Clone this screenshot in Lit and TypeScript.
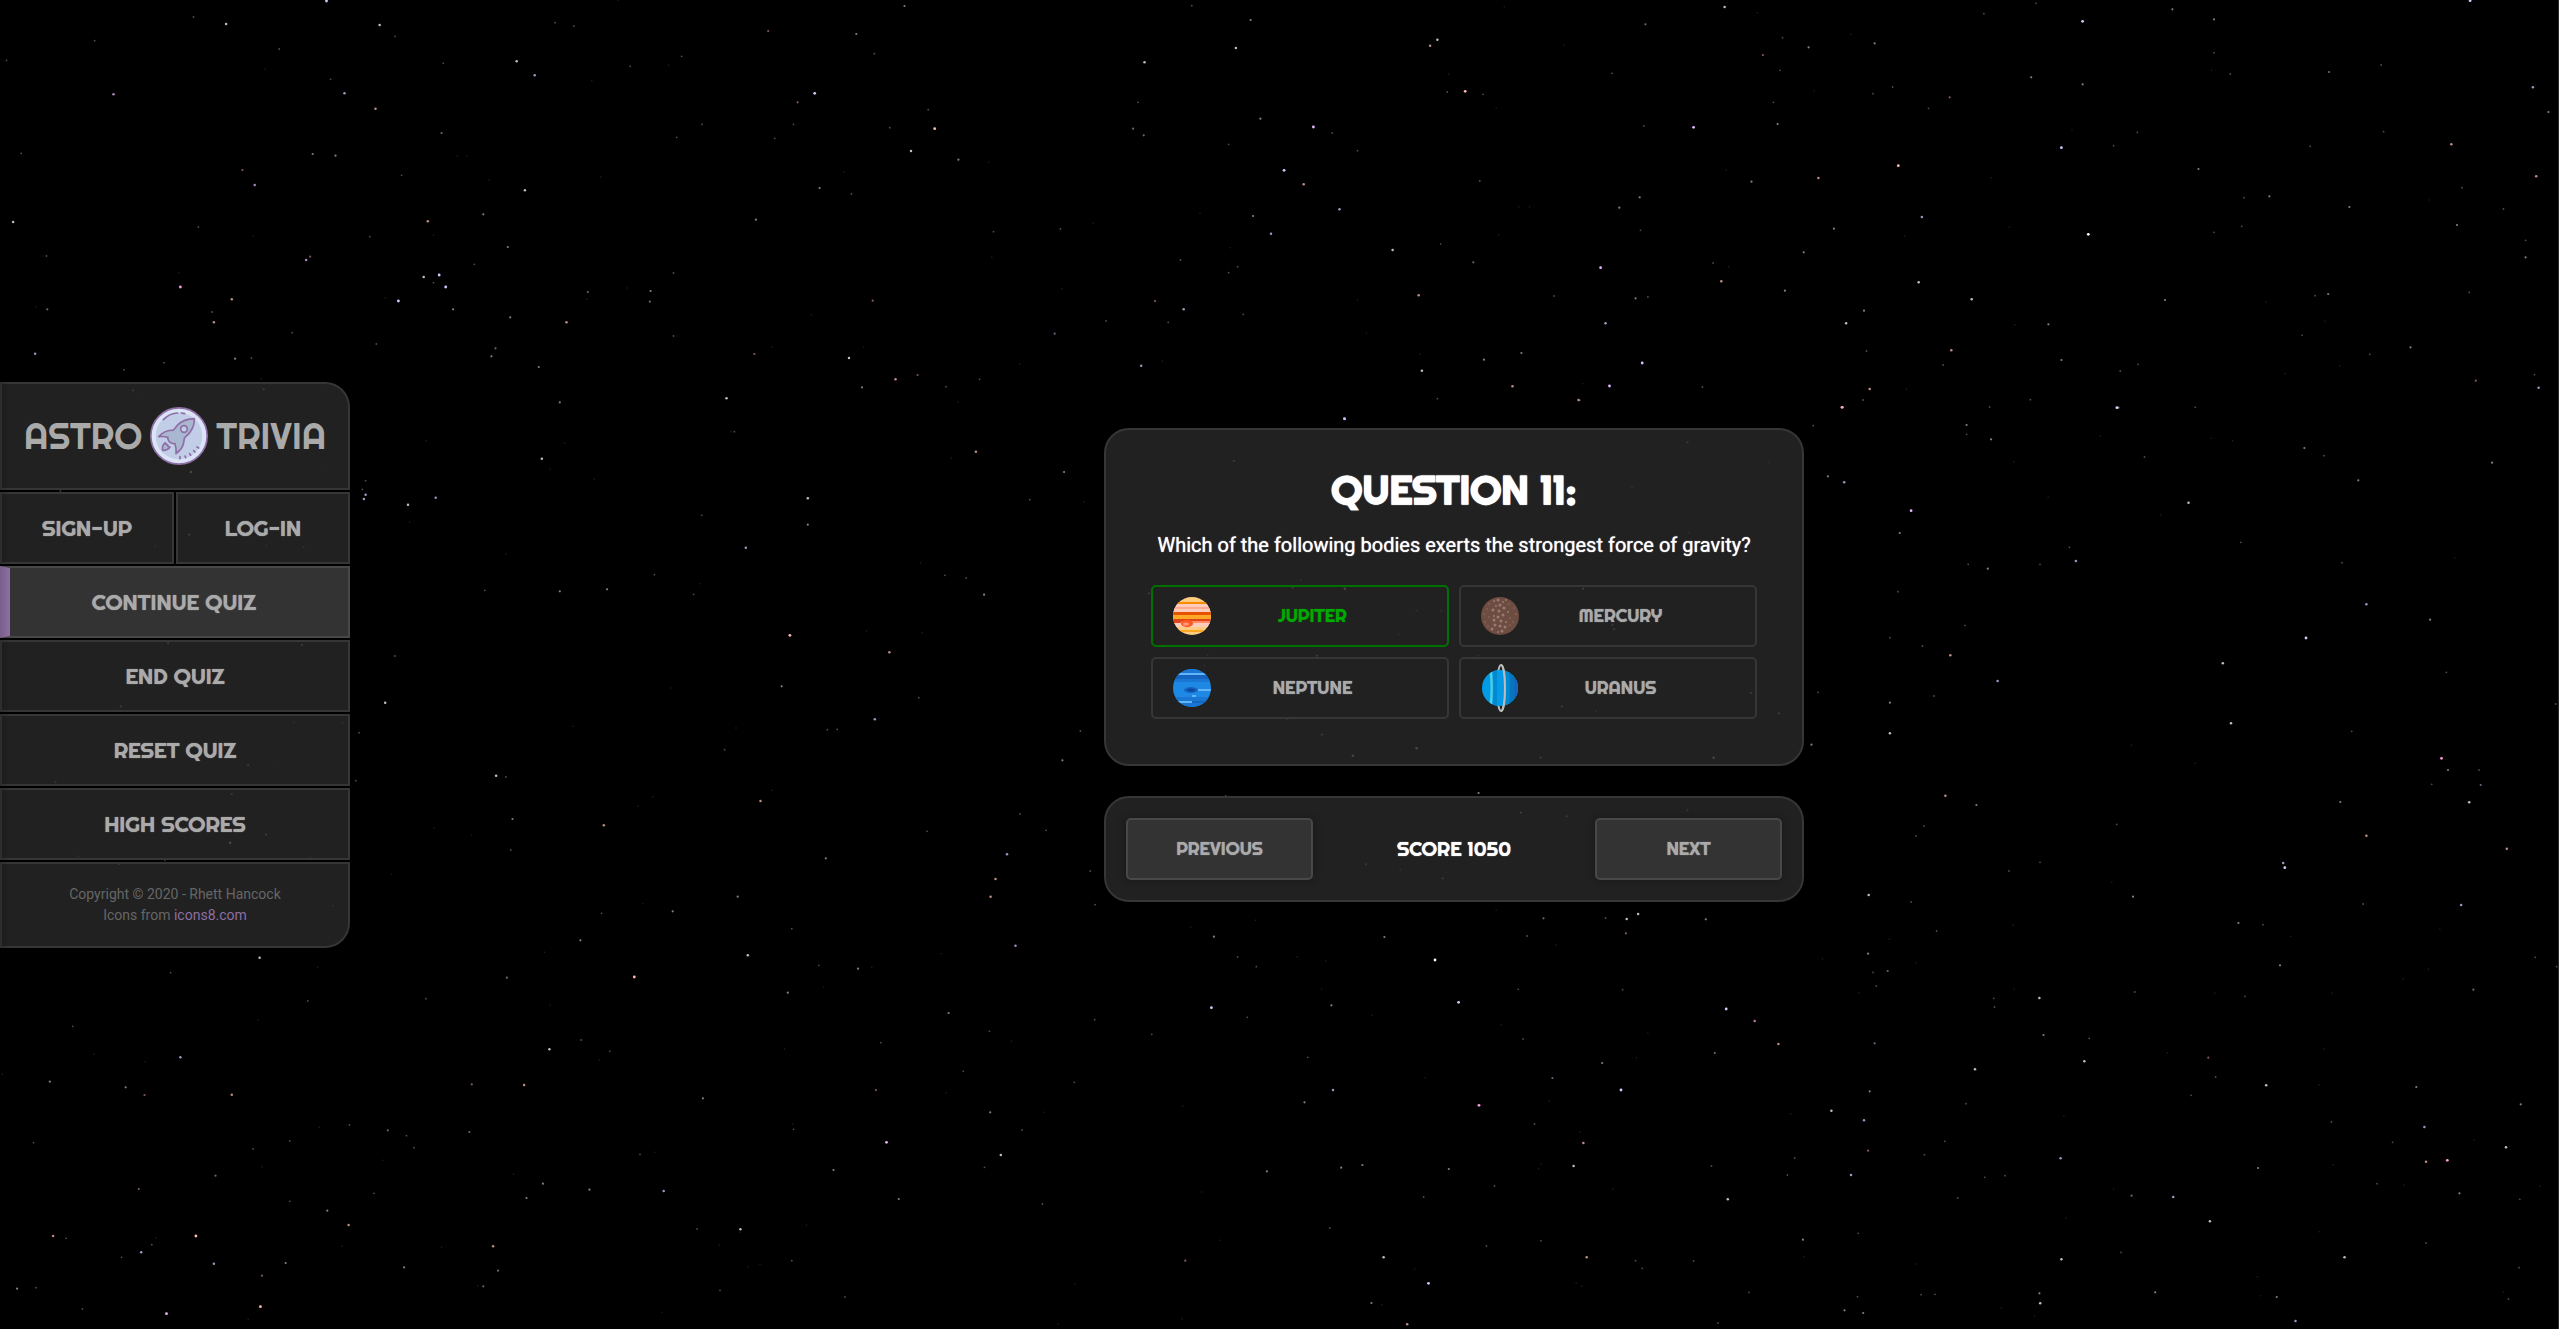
import { LitElement, css, html, svg } from "lit";
import { customElement, property, state } from "lit/decorators.js";
import { classMap } from "lit/directives/class-map.js";

/* ---------- star field ---------- */

interface Sector {
  x: number;
  y: number;
  sx: number;
  sy: number;
  stars: string;
}

/* Each star is "x,y,level[tint]": level 1 (faint) to 5 (bright),
   tint b = blue, p = pink, v = violet, r = red. */
const SECTORS: Sector[] = [
  {
    x: 0, y: 0, sx: 1280 / 1568, sy: 1 / 3,
    stars: `400,3,5b 757,1,1 1108,18,3 1460,17,2 1532,60,3 237,51,2 277,72,4 465,75,4 484,109,2 680,68,2 703,78,2
    941,93,3r 1049,102,3 116,122,2 342,147,2 8,181,2 543,190,2 633,184,4 655,226,4b 835,169,2 819,195,1 772,199,2
    1071,161,2 1514,144,4 1402,187,4 325,208,1 405,238,2 725,242,1 139,283,4v 422,280,4b 460,326,4r 998,280,5b
    977,307,3r 1137,329,2 1394,307,2 1544,356,3 860,373,2 972,373,2 1145,386,5r 1090,383,2 1388,386,3b 1401,406,3b
    829,412,2 949,415,2 541,399,3b 383,462,3 411,467,3 26,460,2 1116,453,4 1174,479,3 1211,487,1 1505,433,2 297,510,3r
    312,555,4v 492,526,2 560,467,1 572,467,1 643,571,4 736,531,1 1034,517,1 1004,564,3 1043,582,2 599,540,1 592,643,3
    524,664,4r 16,666,4 243,681,2 310,707,1 453,710,2 531,706,1 926,659,3 1217,695,2 1299,687,2 1339,669,1 1470,640,1
    1535,648,3 1557,701,4b 57,768,2 375,780,4v 380,770,3p 219,819,1 622,741,3 581,793,2 519,831,4 538,825,5b 531,848,2
    546,861,5b 221,861,5p 284,898,4r 488,903,5b 472,893,1 555,928,3 825,819,2 720,876,3r 797,873,3 768,864,1 719,898,1
    796,905,3b 1069,902,3r 1215,771,1 1446,780,2 1507,743,1 1516,800,2 1505,818,2 1301,866,1 1415,903,3r 1450,928,4b
    1431,967,2 1523,943,2 1355,963,2 1292,1001,3v 44,921,1 58,928,3b 260,936,2 262,967,4r 358,998,2 625,952,3
    694,967,4r 994,944,1 825,1008,2 461,1032,2 607,1045,3b 602,1069,3 660,1101,3 43,1061,4v 201,1088,2 288,1076,3
    308,1074,2 152,1109,2 320,1136,1 924,1062,3r 1040,1074,4 1058,1042,1 1097,1138,4r 1124,1125,3p 1056,1162,3
    1159,1160,2 1200,1138,2 1249,1093,1 1398,1097,4b 1424,1083,1 890,1195,4 946,1042,1 163,1171,3 323,1168,3 172,1184,1`,
  },
  {
    x: 1280, y: 0, sx: 1279 / 1568, sy: 1 / 3,
    stars: `275,20,1 545,21,4 585,38,1 927,10,2 863,41,2 984,64,5b 1094,28,3 1145,58,3 1459,2,5b 448,73,3b 193,119,4
    184,137,4r 348,136,1 592,165,3r 616,113,2 648,142,3 700,103,1 729,130,3 613,211,2 407,220,2 207,223,1 921,232,3
    984,253,3 751,261,2 727,281,2 655,273,1 821,292,3r 1145,158,2 1142,211,1 1165,222,2 1286,216,3r 1350,195,2
    1536,262,4b 1555,336,3 205,276,2 227,274,5r 249,283,2 265,323,1 605,307,2 795,325,2 610,372,3 446,378,2
    507,382,5v 41,381,5v 64,399,2 95,452,2 971,390,1 1051,397,2 1022,437,2 958,443,5b 1353,395,2 1263,439,2 1436,433,4r
    5,511,5b 29,553,4r 758,497,5r 547,510,1 872,533,1 578,545,3 660,534,4r 245,543,2 1126,507,3 1540,529,4r 1449,563,2
    441,592,3 416,623,3 73,628,4b 293,620,1 306,620,1 1182,593,2 1213,589,3 1311,621,3 1409,600,1 1500,627,2 787,651,4b
    442,691,2 268,704,1 197,732,2r 138,750,4 679,686,3 894,682,1 991,703,5 766,708,1 1145,697,2 1179,679,2 1443,675,3
    1527,721,2 1527,772,3 237,787,3v 393,803,5v 642,757,3 531,789,2 550,800,1 541,844,4r 783,847,4 619,872,3 170,886,4r
    336,888,2 436,895,3 451,891,2 95,900,1 848,898,4 1085,900,3 1285,882,3 1269,887,2 1458,877,2 1209,906,1 716,932,3
    694,970,4 399,970,4b 901,974,1 942,973,3 106,999,1 1253,1006,2 1281,964,1 1386,1042,3 1336,1063,2 296,1059,3
    250,1079,3 172,1062,1 719,1053,2 823,1051,4r 813,1095,2 958,1080,3 1052,1093,2 1030,1113,2 444,1089,5v 174,1112,4
    285,1159,4r 404,1158,5v 518,1161,2 371,1151,1 723,1167,4r 768,1168,1 1232,1121,1 1299,1098,1 1466,1142,3r
    1538,1124,2 1543,1163,4b 193,1196,2 366,1200,4r 715,1200,2 920,1199,2 689,1222,5r 870,1221,2 1026,1223,5b
    1122,1222,2 79,1256,5b`,
  },
  {
    x: 0, y: 910, sx: 1280 / 1568, sy: 1 / 3,
    stars: `737,10,2 824,4,3 970,56,2 711,91,3 667,127,1 916,136,4 1244,107,4v 1153,131,1 1459,52,1 1487,80,3
    1538,31,1 1516,141,2 1539,170,2 1003,166,2 1051,176,3 1068,172,1 318,143,4 389,172,1 209,188,2 621,203,3b
    777,201,5r 965,248,3 1009,232,1 377,273,2 522,266,2 674,286,1 1162,309,3 1341,329,2 1484,293,5b 1528,322,2
    316,331,1 89,349,2 1212,364,2 1239,394,1 1079,398,2 1411,373,2 712,390,2 673,418,4 747,424,2 734,449,1
    961,417,1 221,442,4b 115,433,1 178,455,1 3,493,1 61,515,3 1180,484,2 1316,517,2 578,523,3r 642,525,4r 154,532,3
    177,555,3r 284,554,4r 861,565,3 1073,540,3r 1159,548,1 1213,607,3 1279,607,1 1449,588,1 428,645,2 475,661,3b
    575,666,3b 498,677,2 391,652,1 355,693,2 41,698,2 310,717,2 507,713,2 972,658,2 971,643,1 1252,660,2 1086,697,5v
    1226,735,4 1206,772,2 784,733,2 802,727,1 469,751,1 321,771,1 1021,780,3 1552,784,3 264,797,3r 629,793,1
    665,821,3 722,839,3 813,843,4b 645,864,3 458,850,2 170,837,3r 355,874,2 1101,867,3 1277,882,2 1472,846,1 401,902,3
    427,945,4r 854,957,2 907,958,4 906,967,1 988,946,1 65,978,4r 81,985,2 191,983,1 240,978,5r 186,1004,2 419,1009,1
    604,1009,4r 541,1012,1 881,1005,1 1495,991,1 173,1027,4b 149,1042,2 262,1061,4v 350,1059,3 495,1072,3
    610,1082,3b 970,1052,2 916,1071,1 1452,1052,3r 931,1063,1 321,1097,3r 21,1136,3 44,1133,2 585,1128,1 592,1129,3r
    882,1141,2 1035,1161,2 1317,1123,1 101,1197,2 204,1211,5v 319,1190,5r 304,1228,1 811,1207,1 1448,1227,1 1296,1241,1`,
  },
  {
    x: 1280, y: 910, sx: 1279 / 1568, sy: 1 / 3,
    stars: `265,1,1 323,25,3b 399,24,2 425,27,4 439,12,4 522,28,3 128,81,3 303,78,2 424,70,3r 338,105,1 899,46,1
    805,63,2 747,88,1 1175,39,3 1205,44,2 1239,79,1 1422,58,1 21,140,1 56,153,1 190,150,5 721,131,3 780,158,1 665,147,1
    727,187,2 745,183,3r 1226,166,3 1408,178,1 1539,142,2 1565,170,2 1377,207,1 731,228,2 710,249,1 900,238,1
    51,238,1 292,238,2 420,239,2 219,277,5b 63,286,3 113,316,1 875,265,2 931,264,4 876,291,2 1048,246,2 1146,250,1
    1183,259,2 1290,250,1 1463,239,3b 547,297,5b 582,333,4p 271,345,1 298,387,2 451,370,1 936,375,3 992,385,2
    611,402,4r 729,400,3b 533,429,3b 34,442,2 395,459,3 437,443,1 1138,443,3p 1280,417,1 1088,428,1 986,454,4
    852,478,4 334,504,3b 178,503,1 65,540,4b 418,540,5b 1147,501,2 1209,526,4 1274,524,1 1393,531,3 30,577,3 723,544,3
    841,581,2 1117,556,2 1521,583,3 244,586,5p 330,573,1 676,602,4 716,631,4v 626,611,1 961,618,1 312,642,2
    368,667,1 1289,636,2 1403,651,4b 1364,697,2 1464,690,1 372,699,4r 815,694,2 721,722,3r 1503,712,4 957,745,4b
    790,734,2 631,744,2 1405,755,4r 1431,751,5p 101,765,3 75,773,3 207,777,3 320,762,1 317,776,1 360,768,4 529,768,2
    1199,774,3 1291,764,1 622,795,2 700,795,4b 864,802,2 889,797,2 263,828,2 408,837,1 1345,821,2 1378,826,1 1446,850,3
    1545,828,1 176,861,2 549,868,4 831,864,2 1022,838,1 1044,857,3b 1095,861,4b 1520,868,2 1140,934,4 964,924,1 61,954,2
    709,970,2 1274,965,1 320,992,2 641,989,3 253,1008,2 1405,999,2 1031,1027,2 127,1042,4 376,1042,4r 436,1052,2
    507,1053,2 642,1040,1 958,1048,4 1305,1042,4 780,1062,1 444,1075,2 1519,1073,2 165,1077,1 1198,1100,1 182,1120,5b
    363,1119,1 370,1128,1 575,1147,2 708,1160,2 786,1154,2 803,1153,2 931,1150,3 1073,1147,3 932,1180,4 1202,1157,1
    1222,1161,3 1500,1146,1 1506,1167,2 112,1179,3 125,1184,1 692,1201,3 715,1209,3 884,1195,1 925,1219,1
    1245,1233,4b 156,1243,4r 537,1239,2`,
  },
  {
    x: 0, y: 400, sx: 2559 / 1568, sy: 1 / 3,
    stars: `343,7,3 587,7,1 448,95,1 450,95,2 261,122,1 346,130,1 598,155,4r 332,176,4 583,174,1 652,216,3 337,207,1
    364,237,1 224,242,2 222,268,2 224,284,4b 223,297,4b 267,293,4v 250,314,4 495,295,4 664,305,1 631,299,2 251,367,1
    430,346,2 495,374,3 457,443,4b 310,462,1 564,489,1 401,524,2 579,526,2 592,534,2 429,551,1 297,571,2 343,574,3
    372,568,3 425,583,2 603,584,3 484,706,5r 531,692,1 565,698,1 242,768,2 545,757,4r 411,864,1 479,859,3 563,893,2
    236,908,4 536,958,4b 351,979,1 451,984,1 662,993,2 507,989,2 513,988,2 444,1049,2 220,998,2 651,1081,3 304,1127,4
    310,1131,2 218,1142,2 466,1203,4r 473,1171,1 400,1190,1 391,1219,1 314,1257,3 370,1276,4r 625,1242,2 266,1285,1
    641,1291,2 568,1294,2 289,1306,1 313,1350,2 617,1363,4b 506,1375,3 668,1413,2 240,1423,1 610,1437,4r 452,1490,3
    607,1490,4r 671,1514,2 394,1511,1 824,57,4v 968,1,2 1129,22,4p 1298,23,3 1111,77,2 1205,75,3 1205,103,2 1220,118,3
    1287,107,1 1355,115,1 1412,144,3 1368,122,1 1314,171,2 1424,167,2 1527,188,3 1234,185,1 1120,229,3 1130,247,4b
    1445,241,3 1341,308,4 1255,292,1 1171,332,5v 1324,345,1 1164,399,3 1373,427,2 1268,442,2 1272,483,4b
    1206,493,2 1250,493,2 1218,506,3 1435,488,2 1504,473,1 1163,575,2 1450,613,4b 1489,659,3 1204,676,2 1158,713,2
    1413,714,5b 1178,738,2 1195,766,4r 1362,790,4 1499,817,2 1224,843,4b 1114,877,2 1185,888,2 1158,908,3 1367,970,4
    1441,994,2 1158,1000,4 1110,1034,3 1496,1075,5p 1345,1090,1 1306,1036,1 1500,1110,3 1519,1110,2 1490,1153,2
    1520,1155,3b 1192,1187,4r 1434,1206,3 1513,1207,4 1211,1215,3 1297,1273,2 1179,1278,2 1450,1307,4r 1174,1308,2
    1536,1346,4r 1250,1387,2 1399,1389,4b 1400,1403,5b 1231,1413,2 1294,1447,1 1145,1485,4 1307,1490,3 1508,1515,4b
    1171,1506,2 1448,1512,2 1566,912,2 751,1188,2 906,1179,3 117,216,4 199,210,1 37,273,2r 116,404,3 163,436,2
    186,441,2 95,439,2 103,730,3 185,735,3 74,919,3 180,967,2 210,969,2 152,1095,3 171,1096,1 34,1147,3v 142,1182,3
    163,1304,3 141,1328,4 48,1369,2 190,1375,3 101,1381,2r 73,1392,3 204,1517,2 1034,127,3 756,183,3 1084,187,2
    1000,261,2 1035,398,2 797,540,2 704,580,3 792,563,3 824,566,4 970,566,3 868,632,2 883,632,2 857,703,2 988,675,3
    989,688,3 740,766,2 807,767,3 738,796,2 906,767,2 1073,879,3 957,920,3 978,932,2 789,955,4 810,1004,3 868,1045,4
    829,1067,4 944,1073,3 1050,1073,4 1090,940,3 932,1238,3 960,1249,3 1034,1231,3b 858,1410,2 837,1393,3 884,1435,3`,
  },
];

const TINTS: Record<string, string> = {
  "": "#ffffff",
  b: "#ccccff",
  p: "#ff99dd",
  v: "#e0b8ff",
  r: "#ffbbb0",
};

@customElement("star-field")
export class StarField extends LitElement {
  static styles = css`
    :host {
      position: absolute;
      inset: 0;
      overflow: hidden;
      background: #000;
    }
    .sky {
      display: block;
      width: 100%;
      height: 100%;
    }
  `;

  private renderStar(sector: Sector, entry: string) {
    const [x, y, kind] = entry.split(",");
    const level = Number(kind[0]);
    const cx = sector.x + Number(x) * sector.sx;
    const cy = sector.y + Number(y) * sector.sy;
    const r = [0, 0.7, 0.9, 1.1, 1.25, 1.4][level];
    const opacity = [0, 0.14, 0.3, 0.5, 0.75, 1][level];
    return svg`<circle cx=${cx.toFixed(1)} cy=${cy.toFixed(1)} r=${r} fill=${TINTS[kind.slice(1)]} opacity=${opacity} />`;
  }

  render() {
    return html`<svg class="sky" aria-hidden="true">
      ${SECTORS.map((s) => s.stars.trim().split(/\s+/).map((e) => this.renderStar(s, e)))}
    </svg>`;
  }
}

/* ---------- icons ---------- */

const rocket = html`<svg class="logo" viewBox="0 0 174 174" fill="none" stroke="#8e6ea4" stroke-linecap="round" stroke-linejoin="round" aria-hidden="true">
  <circle cx="87" cy="87" r="84.500" fill="#dbe4f6" stroke-width="5" />
  <circle cx="87" cy="87" r="70" fill="#c2cde8" stroke="none" />
  <path d="M133 35C114 36 94 43 84 53C78 59 74 66 69 70C53 68 39 75 26 89C37 88 46 89 54 91C52 94 54 99 58 104C63 109 69 111 75 110C78 120 79 130 78 140C90 131 99 121 101 107C102 101 102 97 104 92C121 78 134 57 133 35Z" fill="#a9b7d0" stroke-width="5" />
  <circle cx="102" cy="66" r="10" fill="#c2cde8" stroke-width="5" />
  <path d="M46 107C38 113 36 121 38 130C46 131 54 128 60 120C56 120 53 117 53 113C49 114 47 111 46 107Z" fill="#a9b7d0" stroke-width="5" />
  <path d="M40 38C53 25 66 18 83 18M94 18L104 20" stroke-width="5" />
  <path d="M90 149L90 155M105 147L107 152M119 140L122 145M131 131L135 135M141 120L146 123" stroke-width="5" />
</svg>`;

const jupiter = html`<svg class="planet" viewBox="0 0 48 48" aria-hidden="true">
  <defs><clipPath id="j"><circle cx="24" cy="24" r="19" /></clipPath></defs>
  <g clip-path="url(#j)">
    <rect width="48" height="48" fill="#ffcc80" />
    <rect y="10" width="48" height="2" fill="#fb8c00" />
    <rect y="12" width="48" height="8" fill="#ffccbc" />
    <rect y="15" width="48" height="2" fill="#ffab91" />
    <rect y="20" width="48" height="3" fill="#e65100" />
    <rect y="23" width="48" height="4" fill="#ffa726" />
    <rect y="27" width="48" height="2" fill="#dd4418" />
    <rect y="29" width="48" height="2" fill="#ff8a65" />
    <rect y="31" width="48" height="4" fill="#ffccbc" />
    <rect y="38" width="48" height="2" fill="#ffa726" />
    <path d="M5 29H14L12 31H5Z" fill="#dd4418" />
    <ellipse cx="19" cy="31.500" rx="6" ry="3.700" fill="#ff5722" />
    <ellipse cx="18" cy="32" rx="3.300" ry="1.800" fill="#ff8a65" />
    <ellipse cx="18" cy="32" rx="1.500" ry="0.800" fill="#ffab91" />
  </g>
</svg>`;

const neptune = html`<svg class="planet" viewBox="0 0 48 48" aria-hidden="true">
  <defs><clipPath id="n"><circle cx="24" cy="24" r="19" /></clipPath></defs>
  <g clip-path="url(#n)">
    <rect width="48" height="48" fill="#1e88e5" />
    <rect width="48" height="18" fill="#1976d2" />
    <rect y="11" width="48" height="4" fill="#1565c0" />
    <rect y="9" width="48" height="2" fill="#64b5f6" />
    <rect y="33" width="48" height="15" fill="#1976d2" />
    <rect x="24" y="37" width="24" height="2" fill="#1565c0" />
    <rect x="8" y="37" width="16" height="2" fill="#64b5f6" />
    <rect x="24" y="31" width="4" height="2" fill="#64b5f6" />
    <rect x="30" y="25" width="14" height="2" fill="#64b5f6" />
    <ellipse cx="23" cy="26" rx="7" ry="3" fill="#1565c0" />
    <ellipse cx="23" cy="26" rx="4" ry="1.500" fill="#0d47a1" />
  </g>
</svg>`;

const BRIGHT = [
  [22, 8, 2], [18, 9, 1], [27, 10, 1], [30, 8, 1], [24, 13, 2], [20, 14, 1], [28, 16, 2], [17, 18, 2],
  [23, 19, 2], [32, 20, 1], [18, 24, 1], [22, 25, 2], [27, 23, 2], [18, 28, 2], [25, 29, 2], [30, 30, 1],
  [19, 33, 2], [24, 34, 2], [29, 35, 2], [16, 37, 2], [26, 39, 2], [22, 40, 1],
];
const DIM = [
  [13, 12], [11, 17], [8, 22], [13, 25], [9, 30], [12, 34], [33, 12], [38, 16], [40, 22], [34, 26], [37, 30], [34, 33],
];

const mercury = html`<svg class="planet" viewBox="0 0 48 48" aria-hidden="true">
  <circle cx="24" cy="24" r="19" fill="#6d4c41" />
  ${DIM.map(([x, y]) => svg`<circle cx=${x} cy=${y} r="1.3" fill="#7f5a4e" />`)}
  ${BRIGHT.map(([x, y, s]) => svg`<circle cx=${x} cy=${y} r=${s === 2 ? 1.5 : 1} fill="#9a7b70" />`)}
</svg>`;

const uranus = html`<svg class="planet" viewBox="0 0 48 48" aria-hidden="true">
  <defs><clipPath id="u"><circle cx="24" cy="24" r="18" /></clipPath></defs>
  <ellipse cx="25" cy="24" rx="4" ry="23" fill="none" stroke="#bdbdbd" stroke-width="2" />
  <g clip-path="url(#u)">
    <rect width="48" height="48" fill="#039be5" />
    <path d="M13 5C15 17 15 31 13 43H16C17 31 17 17 16 5Z" fill="#4dd0e1" />
    <path d="M17 5H21V43H17Q18 24 17 5Z" fill="#0288d1" />
    <rect x="29" width="19" height="48" fill="#0288d1" />
    <path d="M32 5Q36 24 32 43H48V5Z" fill="#0277bd" />
    <path d="M36 5Q41 24 36 43H48V5Z" fill="#1565c0" />
  </g>
  <path d="M25 1C30.300 1 30.300 47 25 47" fill="none" stroke="#bdbdbd" stroke-width="2" />
</svg>`;

/* ---------- page ---------- */

interface Answer {
  name: string;
  icon: unknown;
}

const ANSWERS: Answer[] = [
  { name: "Jupiter", icon: jupiter },
  { name: "Mercury", icon: mercury },
  { name: "Neptune", icon: neptune },
  { name: "Uranus", icon: uranus },
];

@customElement("app-root")
export class AppRoot extends LitElement {
  @property({ type: Number }) question = 11;
  @property({ type: Number }) score = 1050;
  @state() private active = "Continue Quiz";
  private correct = "Jupiter";

  static styles = css`
    :host {
      --display: "Righteous", "Lato", sans-serif;
      --panel: rgba(41, 41, 41, 0.8);
      --line: #363636;
      --text: #aaa;
      --accent: #8e6fa3;
      --glow: 0 0 1px currentColor;
      position: relative;
      display: flex;
      align-items: center;
      box-sizing: border-box;
      min-height: 100vh;
      border-right: 1px solid #2a2a2a;
      background: #000;
      color: var(--text);
      font-family: "Roboto", sans-serif;
    }
    * {
      box-sizing: border-box;
    }
    button {
      margin: 0;
      border: 2px solid var(--line);
      background: var(--panel);
      color: inherit;
      font-family: var(--display);
      font-weight: 400;
      text-shadow: var(--glow);
      text-transform: uppercase;
      cursor: pointer;
    }

    .sidebar {
      position: relative;
      display: flex;
      flex-direction: column;
      gap: 2px;
      flex: 0 0 350px;
    }
    .sidebar::after {
      position: absolute;
      inset: 0 auto 0 0;
      width: 10px;
      background: linear-gradient(90deg, rgba(0, 0, 0, 0.15), transparent);
      content: "";
      pointer-events: none;
    }
    .brand,
    .credits {
      border: 2px solid var(--line);
      background: var(--panel);
    }
    .brand {
      display: flex;
      align-items: center;
      justify-content: center;
      gap: 8px;
      height: 108px;
      margin: 0;
      border-top-right-radius: 25px;
      font-family: var(--display);
      font-size: 36px;
      font-weight: 400;
      text-transform: uppercase;
    }
    .logo {
      width: 58px;
      height: 58px;
    }
    .menu {
      display: grid;
      grid-template-columns: 1fr 1fr;
      gap: 2px;
    }
    .item {
      grid-column: span 2;
      height: 72px;
      font-size: 22px;
    }
    .item.half {
      grid-column: span 1;
    }
    .item.active {
      padding: 0 10px 0 0;
      border-color: #484848;
      border-left: 10px solid var(--accent);
      background: #333;
    }
    .credits {
      display: flex;
      flex-direction: column;
      justify-content: center;
      height: 86px;
      border-bottom-right-radius: 25px;
      color: #666;
      font-size: 14px;
      line-height: 21px;
      text-align: center;
    }
    .credits p {
      margin: 0;
    }
    .credits a {
      color: var(--accent);
      text-decoration: none;
    }

    .quiz {
      position: relative;
      display: flex;
      flex: 1;
      flex-direction: column;
      align-items: center;
      gap: 30px;
    }
    .card {
      width: 700px;
      max-width: 100%;
      border: 2px solid var(--line);
      border-radius: 25px;
      background: var(--panel);
      text-shadow: var(--glow);
    }
    .ask {
      padding: 35px 45px 45px;
      text-align: center;
    }
    .title {
      margin: 0;
      color: #fff;
      font-family: var(--display);
      font-size: 40px;
      font-weight: 700;
      line-height: 50px;
      text-shadow: var(--glow);
      text-transform: uppercase;
    }
    .prompt {
      margin: 15px 0 25px;
      color: #fff;
      font-size: 20px;
      line-height: 30px;
    }
    .answers {
      display: grid;
      grid-template-columns: 1fr 1fr;
      gap: 10px;
    }
    .answer {
      display: flex;
      align-items: center;
      height: 62px;
      padding: 0 38px 0 15px;
      border-radius: 5px;
      background: none;
      font-size: 18px;
    }
    .answer .name {
      flex: 1;
    }
    .answer.correct {
      border-color: #007000;
      color: #00aa00;
    }
    .planet {
      width: 48px;
      height: 48px;
    }
    .controls {
      display: grid;
      grid-template-columns: 187px 1fr 187px;
      align-items: center;
      padding: 20px;
    }
    .step {
      height: 62px;
      border-color: #484848;
      border-radius: 5px;
      background: #333;
      font-size: 18px;
      box-shadow: 0 0 8px rgba(0, 0, 0, 0.3);
    }
    .score {
      margin: 0;
      color: #fff;
      font-family: var(--display);
      font-size: 20px;
      text-align: center;
      text-transform: uppercase;
    }
  `;

  private renderItem(label: string, half = false) {
    return html`<button
      class=${classMap({ item: true, half, active: label === this.active })}
      @click=${() => (this.active = label)}
    >${label}</button>`;
  }

  render() {
    return html`
      <star-field></star-field>
      <aside class="sidebar">
        <h1 class="brand"><span>Astro</span>${rocket}<span>Trivia</span></h1>
        <nav class="menu">
          ${this.renderItem("Sign-Up", true)} ${this.renderItem("Log-In", true)}
          ${["Continue Quiz", "End Quiz", "Reset Quiz", "High Scores"].map((l) => this.renderItem(l))}
        </nav>
        <footer class="credits">
          <p>Copyright © 2020 - Rhett Hancock</p>
          <p>Icons from <a href="https://icons8.com">icons8.com</a></p>
        </footer>
      </aside>
      <main class="quiz">
        <section class="card ask">
          <h2 class="title">Question ${this.question}:</h2>
          <p class="prompt">Which of the following bodies exerts the strongest force of gravity?</p>
          <div class="answers">
            ${ANSWERS.map(
              (a) => html`<button class=${classMap({ answer: true, correct: a.name === this.correct })}>
                ${a.icon}<span class="name">${a.name}</span>
              </button>`
            )}
          </div>
        </section>
        <section class="card controls">
          <button class="step">Previous</button>
          <p class="score">Score ${this.score}</p>
          <button class="step">Next</button>
        </section>
      </main>
    `;
  }
}
